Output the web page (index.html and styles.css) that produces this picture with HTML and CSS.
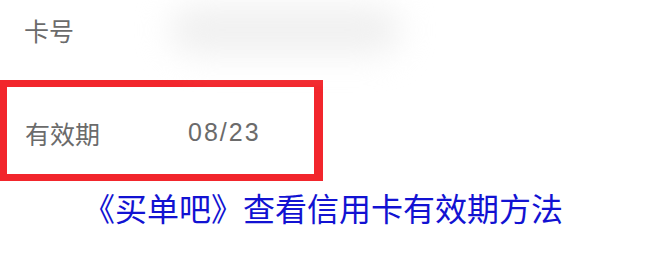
FILE: index.html
```html
<!DOCTYPE html>
<html lang="zh-CN">
<head>
  <meta charset="UTF-8">
  <meta name="viewport" content="width=device-width, initial-scale=1.0">
  <title>买单吧 查看信用卡有效期方法</title>
  <link rel="stylesheet" href="styles.css">
</head>
<body>
  <div class="info-row number-row">
    <span class="label">卡号</span>
    <div class="masked"></div>
  </div>
  <div class="info-row expiry-row">
    <span class="label">有效期</span>
    <span class="value">08/23</span>
  </div>
  <h1 class="caption">《买单吧》查看信用卡有效期方法</h1>
</body>
</html>
```

FILE: styles.css
```css
body {
  margin: 0;
  width: 650px;
  height: 260px;
  overflow: hidden;
  background: #fff;
  font-family: "Noto Sans CJK SC", sans-serif;
  color: #6b6b6b;
}
.info-row {
  display: flex;
  align-items: center;
  box-sizing: border-box;
}
.label {
  font-size: 25px;
  line-height: 32px;
}
.number-row {
  height: 80px;
  padding: 0 0 20px 24px;
}
.masked {
  width: 230px;
  height: 48px;
  margin-left: 96px;
  background: #f0f0f0;
  border-radius: 24px;
  filter: blur(16px);
}
.expiry-row {
  width: 323px;
  height: 101px;
  border: 7px solid #f2262c;
  border-right-width: 9px;
  padding: 4px 0 0 18px;
}
.value {
  margin-left: 88px;
  font-family: "Liberation Sans", Arial, sans-serif;
  font-size: 25px;
  letter-spacing: 2px;
}
.caption {
  margin: 3px 0 0;
  padding-right: 4px;
  text-align: center;
  font-size: 32px;
  line-height: 46px;
  font-weight: normal;
  color: #1212d2;
}
```
